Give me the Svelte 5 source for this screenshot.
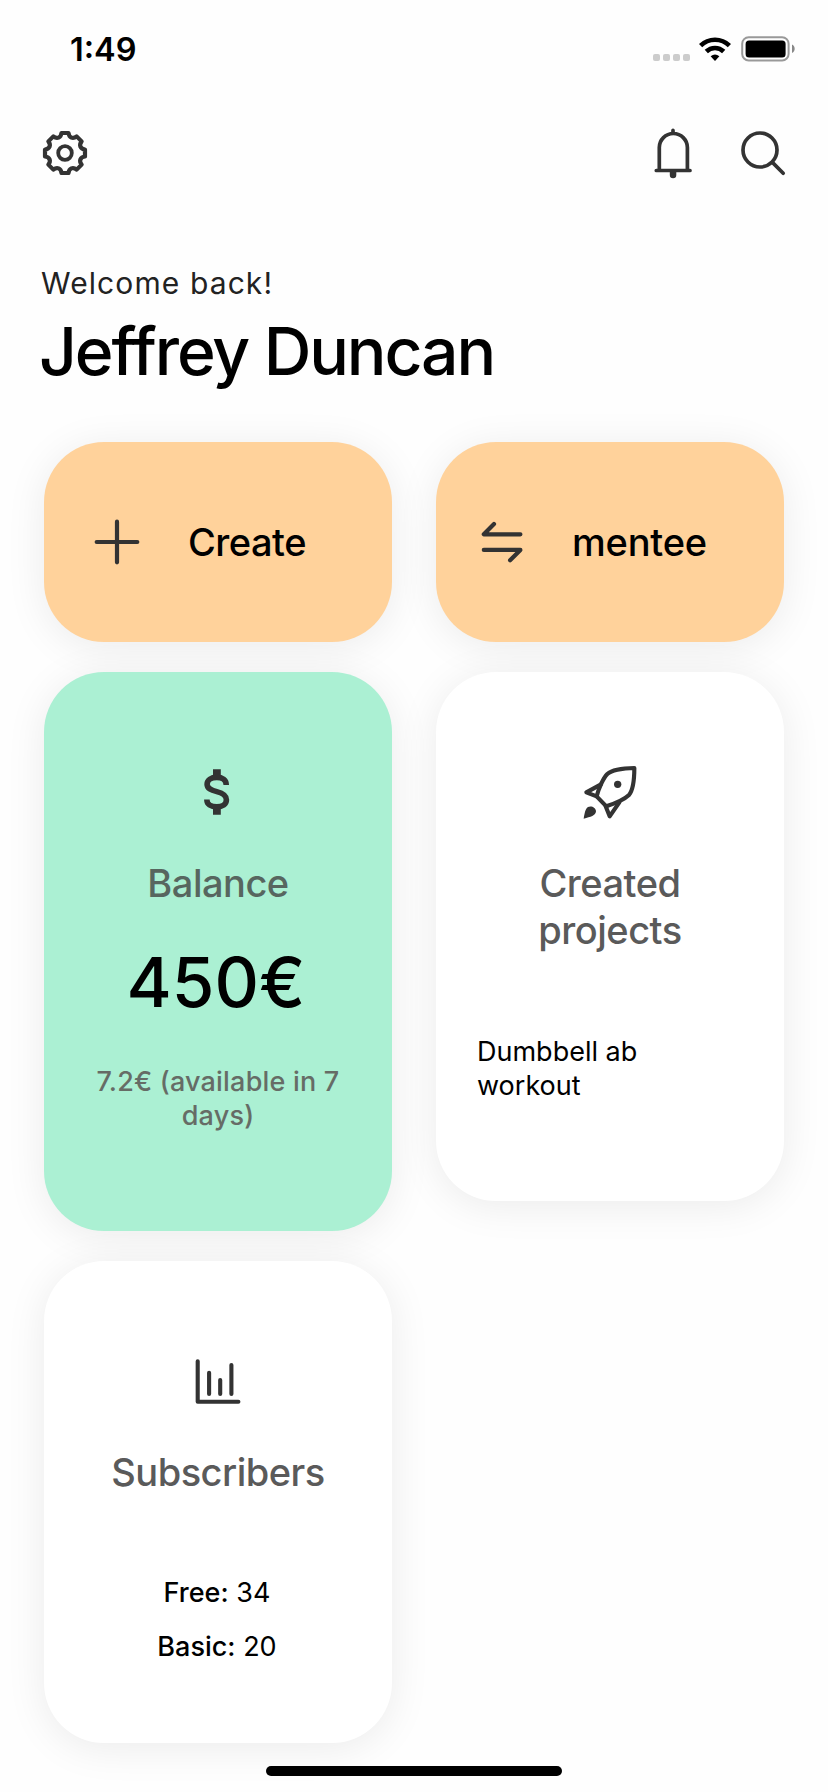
<script>
  const subscribers = [
    { plan: 'Free', count: 34 },
    { plan: 'Basic', count: 20 },
  ];

  // Outline of the eight-toothed settings gear, centred on 0,0.
  function gearPath() {
    const at = (r, deg) => {
      const a = (deg * Math.PI) / 180;
      return `${(r * Math.sin(a)).toFixed(2)} ${(-r * Math.cos(a)).toFixed(2)}`;
    };
    let d = '';
    for (let i = 0; i < 8; i++) {
      const c = i * 45;
      d += `${i ? 'L' : 'M'}${at(20.3, c - 10)}L${at(20.3, c + 10)}`;
      d += `C${at(15.8, c + 15)} ${at(15.8, c + 30)} ${at(20.3, c + 35)}`;
    }
    return d + 'Z';
  }
</script>

<div class="screen">
  <div class="status">
    <span class="time">1:49</span>
    <div class="indicators">
      <div class="signal"><i></i><i></i><i></i><i></i></div>
      <svg class="wifi" width="32" height="25" viewBox="0 0 32 25">
        <g fill="none" stroke="#000" stroke-width="4.6">
          <path d="M1.6 8.6A20.6 20.6 0 0 1 30.4 8.6" />
          <path d="M7.3 14.5A12.4 12.4 0 0 1 24.7 14.5" />
        </g>
        <path d="M11.6 19.3Q16 15.5 20.4 19.3L16 24Z" />
      </svg>
      <svg class="battery" width="54" height="26" viewBox="0 0 54 26">
        <rect x="1.2" y="1.2" width="46.4" height="23.2" rx="6.5" fill="none" stroke="#999" stroke-width="2" />
        <rect x="4.6" y="4.4" width="40" height="17" rx="3.5" />
        <path d="M51 8.6C54.6 10 54.6 15.6 51 17Z" fill="#888" />
      </svg>
    </div>
  </div>

  <header class="toolbar">
    <svg class="icon" width="50" height="50" viewBox="-25 -25 50 50">
      <path d={gearPath()} stroke-width="4.2" />
      <circle r="6.8" stroke-width="3.8" />
    </svg>
    <div class="tools">
      <svg class="icon" width="40" height="54" viewBox="653 126 40 54" stroke-width="3.7">
        <path d="M659.3 170.3V147.5a14.05 14.05 0 0 1 28.1 0V170.3M656.3 170.5H690M673 130.4V133" />
        <path d="M669.8 171H676.3V175a3.25 3.25 0 0 1-6.5 0Z" fill="#333" stroke="none" />
      </svg>
      <svg class="icon" width="48" height="54" viewBox="739 126 48 54" stroke-width="3.7">
        <circle cx="760" cy="150" r="17" />
        <path d="M772.4 162.4L783.2 173.2" />
      </svg>
    </div>
  </header>

  <div class="greeting">
    <p class="welcome">Welcome back!</p>
    <h1>Jeffrey Duncan</h1>
  </div>

  <main class="columns">
    <div class="column">
      <button class="card action">
        <svg class="icon" width="48" height="48" viewBox="-24 -24 48 48" stroke-width="4.2">
          <path d="M-20.3 0H20.3M0-20.3V20.3" />
        </svg>
        <span class="create">Create</span>
      </button>

      <section class="card balance">
        <svg class="icon" width="56" height="56" viewBox="190 764 56 56">
          <path
            d="M226.2 785V784.6C226.2 780 222.4 777.4 216.8 777.4C211 777.4 207.1 780 207.1 784.2C207.1 788.6 211 790.2 216.8 791.6C222.8 793.1 226.4 795.4 226.4 799.7C226.4 804.2 222.5 806.9 216.8 806.9C210.8 806.9 206.9 804.2 206.9 800V799.4"
            stroke-width="5.6"
            stroke-linecap="butt"
          />
          <path d="M216.9 769.2V776M216.9 808V814.8" stroke-width="7.8" stroke-linecap="butt" />
        </svg>
        <h2>Balance</h2>
        <div class="amount">450€</div>
        <p class="note">7.2€ (available in 7 days)</p>
      </section>

      <section class="card subs">
        <svg class="icon" width="56" height="56" viewBox="190 1353 56 56" stroke-width="4.1">
          <path d="M197.7 1361.2V1401.8H238.4M209.1 1372.7V1394M220.2 1380V1394M231.4 1365V1394" />
        </svg>
        <h2>Subscribers</h2>
        <ul>
          {#each subscribers as s}
            <li><b>{s.plan}:</b> {s.count}</li>
          {/each}
        </ul>
      </section>
    </div>

    <div class="column">
      <button class="card action swap">
        <svg class="icon" width="48" height="48" viewBox="478 518.4 48 48" stroke-width="4.2">
          <path d="M494 524.4L483.8 534.7H520.4M483.8 550.3H520.4L510.1 560.6" />
        </svg>
        <span class="mentee">mentee</span>
      </button>

      <section class="card projects">
        <svg class="icon" width="56" height="56" viewBox="483 73 168 168" stroke-width="12.5">
          <path d="M640 85C602 85 570 93 559 103C547 115 533 146 527 170L556 200C580 192 609 180 624 166C637 150 640 120 640 85Z" />
          <path d="M540 134L496 158L527 170M595 188L566 230L554 200" />
          <circle cx="590" cy="134" r="11" fill="#333" stroke="none" />
          <path d="M488 237C491 220 493 207 501 202C511 197 525 204 525 215C524 228 509 232 488 237Z" fill="#333" stroke="none" />
        </svg>
        <h2>Created projects</h2>
        <p class="project">Dumbbell ab workout</p>
      </section>
    </div>
  </main>
  <div class="home"></div>
</div>

<style>
  :global(body) {
    background: #fefefe;
  }
  .screen {
    position: relative;
    box-sizing: border-box;
    width: 828px;
    height: 1792px;
    overflow: hidden;
    background: #fefefe;
    color: #000;
    font-family: Inter, 'Liberation Sans', sans-serif;
    font-size: 27px;
    line-height: 34px;
  }
  p, h1, h2, ul {
    margin: 0;
    padding: 0;
  }
  .icon {
    display: block;
    flex: none;
    fill: none;
    stroke: #333;
    stroke-linecap: round;
    stroke-linejoin: round;
  }
  .status {
    display: flex;
    justify-content: space-between;
    align-items: center;
    height: 98px;
    padding: 0 33px 0 70px;
  }
  .time {
    padding-top: 1px;
    font-size: 32.5px;
    font-weight: 600;
    letter-spacing: 0;
  }
  .indicators {
    display: flex;
    align-items: center;
  }
  .signal {
    display: flex;
    gap: 3px;
    margin: 17px 9px 0 0;
  }
  .signal i {
    width: 7px;
    height: 7px;
    border-radius: 2px;
    background: #ccc;
  }
  .wifi {
    margin-right: 10px;
  }
  .toolbar {
    display: flex;
    justify-content: space-between;
    align-items: center;
    height: 110px;
    padding: 0 41px 0 40px;
  }
  .tools {
    display: flex;
    gap: 46px;
  }
  .greeting {
    padding: 56px 0 52px 41px;
  }
  .welcome {
    margin-bottom: 10px;
    color: #222;
    font-size: 30px;
    line-height: 38px;
    letter-spacing: 1.1px;
  }
  h1 {
    margin-left: -2px;
    font-size: 66px;
    font-weight: 500;
    line-height: 78px;
    letter-spacing: -2.1px;
  }
  .columns {
    display: flex;
    align-items: flex-start;
    gap: 44px;
    padding: 0 44px;
  }
  .column {
    display: flex;
    flex: 1;
    flex-direction: column;
    gap: 30px;
    min-width: 0;
  }
  .card {
    display: flex;
    box-sizing: border-box;
    flex-direction: column;
    align-items: center;
    padding: 92px 41px 0;
    border: 0;
    border-radius: 60px;
    background: #fff;
    box-shadow: 0 5px 40px rgba(0, 0, 0, 0.08);
    text-align: center;
  }
  .action {
    flex-direction: row;
    height: 200px;
    padding: 0 0 0 49px;
    background: #ffd29b;
    color: #000;
    font: 500 38px/47px Inter, 'Liberation Sans', sans-serif;
  }
  .swap {
    padding-left: 42px;
  }
  .action span {
    margin-left: 47px;
    padding-top: 1px;
    letter-spacing: -0.5px;
  }
  .action .mentee {
    margin-left: 46px;
    letter-spacing: -0.2px;
  }
  h2 {
    margin-top: 40px;
    color: #5a5a5a;
    font-size: 38px;
    font-weight: 500;
    line-height: 47px;
    letter-spacing: -0.5px;
  }
  .balance {
    height: 559px;
    background: #abf0d3;
  }
  .balance h2 {
    color: #57665f;
  }
  .amount {
    margin-top: 33px;
    padding-right: 4px;
    font-size: 69px;
    font-weight: 500;
    line-height: 84px;
  }
  .note {
    margin: 41px -10px 0;
    padding: 0 10px;
    color: #666c66;
    font-weight: 500;
    letter-spacing: 0.2px;
  }
  .projects {
    height: 529px;
  }
  .projects h2 {
    width: 200px;
  }
  .project {
    align-self: flex-start;
    width: 200px;
    margin-top: 81px;
    text-align: left;
  }
  .subs {
    height: 482px;
  }
  ul {
    display: flex;
    flex-direction: column;
    gap: 20px;
    margin: 80px 2px 0 0;
    list-style: none;
  }
  b {
    font-weight: 500;
  }
  .home {
    position: absolute;
    bottom: 16px;
    left: 266px;
    width: 296px;
    height: 10px;
    border-radius: 5px;
    background: #000;
  }
</style>
